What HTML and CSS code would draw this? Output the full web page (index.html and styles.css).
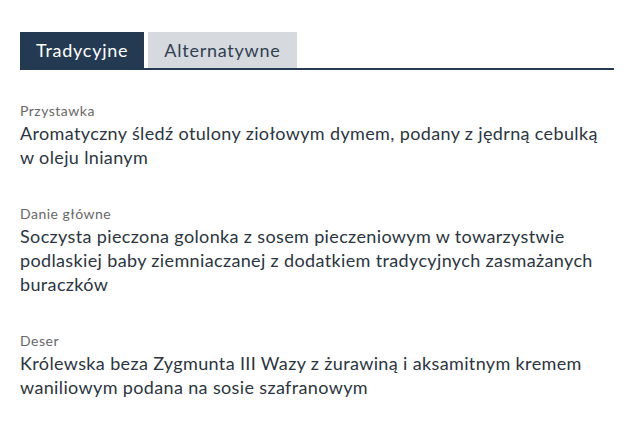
FILE: index.html
```html
<!DOCTYPE html>
<html lang="pl">
<head>
    <meta charset="UTF-8">
    <meta name="viewport" content="width=device-width, initial-scale=1.0">
    <title>Menu</title>
    <link rel="stylesheet" href="styles.css">
</head>
<body>
    <div class="menu">
        <div class="tabs">
            <button class="tab active">Tradycyjne</button>
            <button class="tab">Alternatywne</button>
        </div>
        <div class="panel">
            <div class="course">
                <div class="course-type">Przystawka</div>
                <div class="course-name">Aromatyczny śledź otulony ziołowym dymem, podany z jędrną cebulką w oleju lnianym</div>
            </div>
            <div class="course">
                <div class="course-type">Danie główne</div>
                <div class="course-name">Soczysta pieczona golonka z sosem pieczeniowym w towarzystwie podlaskiej baby ziemniaczanej z dodatkiem tradycyjnych zasmażanych buraczków</div>
            </div>
            <div class="course">
                <div class="course-type">Deser</div>
                <div class="course-name">Królewska beza Zygmunta III Wazy z żurawiną i aksamitnym kremem waniliowym podana na sosie szafranowym</div>
            </div>
        </div>
    </div>
</body>
</html>
```

FILE: styles.css
```css
body {
    margin: 0;
    padding: 32px 26px 0 20px;
    font-family: Lato, 'Liberation Sans', Arial, sans-serif;
    background-color: #fff;
}
.tabs {
    display: flex;
    gap: 4px;
    border-bottom: 2px solid #243a53;
}
.tab {
    font-family: inherit;
    font-size: 18px;
    line-height: 24px;
    letter-spacing: 0.75px;
    padding: 6px 16px;
    border: none;
    border-radius: 0;
    background-color: #d6d9dd;
    color: #2f3f52;
    cursor: pointer;
}
.tab.active {
    background-color: #243a53;
    color: #fff;
}
.panel {
    padding-top: 31px;
}
.course {
    margin-bottom: 35px;
}
.course-type {
    font-size: 14px;
    line-height: 20px;
    letter-spacing: 0.5px;
    color: #686868;
}
.course-name {
    font-size: 18px;
    line-height: 24px;
    letter-spacing: 0.36px;
    color: #2b3541;
}
```
